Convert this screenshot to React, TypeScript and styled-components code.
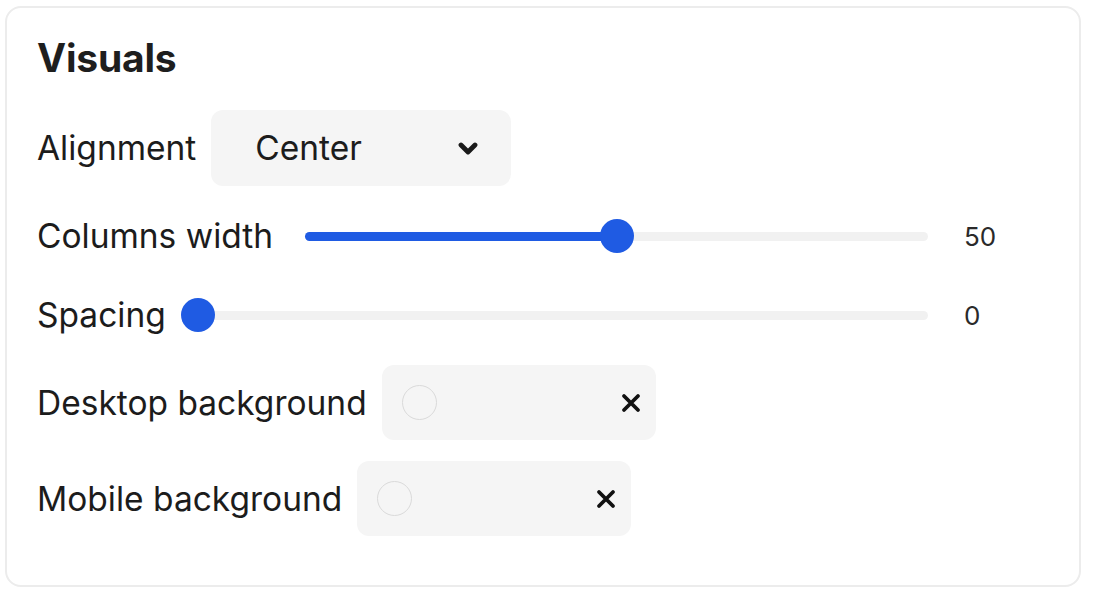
import React, { useState } from "react";
import styled, { createGlobalStyle } from "styled-components";

const GlobalStyle = createGlobalStyle`
  html, body { margin: 0; padding: 0; background: #ffffff; }
  body { font-family: Inter, "Noto Sans", "Liberation Sans", sans-serif; color: #1f1f1f; }
  * { box-sizing: border-box; }
`;

const Page = styled.div`
  padding: 6px 15px 7px 5px;
`;

const Card = styled.section`
  width: 1076px;
  height: 581px;
  border: 2px solid #ececec;
  border-radius: 16px;
  padding: 27px 31px 0 30px;
  display: flex;
  flex-direction: column;
`;

const Title = styled.h2`
  margin: 0 0 29px 0;
  font-size: 39px;
  font-weight: 700;
  line-height: 46px;
  color: #1e1e1e;
  letter-spacing: -0.2px;
`;

const Rows = styled.div`
  display: flex;
  flex-direction: column;
  gap: 21px;
`;

const Row = styled.div<{ $h: number }>`
  display: flex;
  align-items: center;
  gap: 15px;
  height: ${(p) => p.$h}px;
`;

const Label = styled.span`
  font-size: 33.5px;
  line-height: 40px;
  color: #1c1c1c;
  white-space: nowrap;
`;

const SelectBox = styled.div`
  width: 300px;
  height: 76px;
  background: #f5f5f5;
  border-radius: 12px;
  display: flex;
  align-items: center;
  justify-content: space-between;
  padding: 0 33px 0 44px;
  font-size: 33.5px;
  color: #1c1c1c;
`;

const SliderWrap = styled.div`
  flex: 1;
  display: flex;
  align-items: center;
  gap: 19px;
`;

const Track = styled.div`
  position: relative;
  flex: 1;
  height: 9px;
  margin: 0 17px;
  background: #f1f1f1;
  border-radius: 5px;
`;

const Fill = styled.div`
  position: absolute;
  left: 0;
  top: 0;
  bottom: 0;
  background: #1f5be3;
  border-radius: 5px;
`;

const Thumb = styled.div`
  position: absolute;
  top: 50%;
  width: 34px;
  height: 34px;
  margin-left: -17px;
  margin-top: -17px;
  border-radius: 50%;
  background: #1f5be3;
`;

const Value = styled.span`
  width: 84px;
  font-size: 26px;
  color: #2a2a2a;
`;

const ColorBox = styled.div`
  width: 274px;
  height: 75px;
  background: #f5f5f5;
  border-radius: 12px;
  display: flex;
  align-items: center;
  justify-content: space-between;
  padding: 0 15px 0 20px;
`;

const Swatch = styled.span`
  width: 35px;
  height: 35px;
  border-radius: 50%;
  border: 1.5px solid #dadada;
`;

const Chevron = () => (
  <svg width="20" height="13" viewBox="0 0 20 13" fill="none">
    <path d="M3 3 L10 10 L17 3" stroke="#1a1a1a" strokeWidth="4.8" strokeLinecap="round" strokeLinejoin="round" />
  </svg>
);

const Cross = () => (
  <svg width="20" height="20" viewBox="0 0 20 20" fill="none">
    <path d="M3 3 L17 17 M17 3 L3 17" stroke="#111" strokeWidth="3.8" strokeLinecap="round" />
  </svg>
);

const Slider = ({ value }: { value: number }) => (
  <SliderWrap>
    <Track>
      <Fill style={{ width: `${value}%` }} />
      <Thumb style={{ left: `${value}%` }} />
    </Track>
    <Value>{value}</Value>
  </SliderWrap>
);

export default function App() {
  const [cols] = useState(50);
  const [spacing] = useState(0);
  return (
    <Page>
      <GlobalStyle />
      <Card>
        <Title>Visuals</Title>
        <Rows>
          <Row $h={76}>
            <Label>Alignment</Label>
            <SelectBox>
              <span>Center</span>
              <Chevron />
            </SelectBox>
          </Row>
          <Row $h={58}>
            <Label>Columns width</Label>
            <Slider value={cols} />
          </Row>
          <Row $h={58}>
            <Label>Spacing</Label>
            <Slider value={spacing} />
          </Row>
          <Row $h={75}>
            <Label>Desktop background</Label>
            <ColorBox>
              <Swatch />
              <Cross />
            </ColorBox>
          </Row>
          <Row $h={75}>
            <Label>Mobile background</Label>
            <ColorBox>
              <Swatch />
              <Cross />
            </ColorBox>
          </Row>
        </Rows>
      </Card>
    </Page>
  );
}
